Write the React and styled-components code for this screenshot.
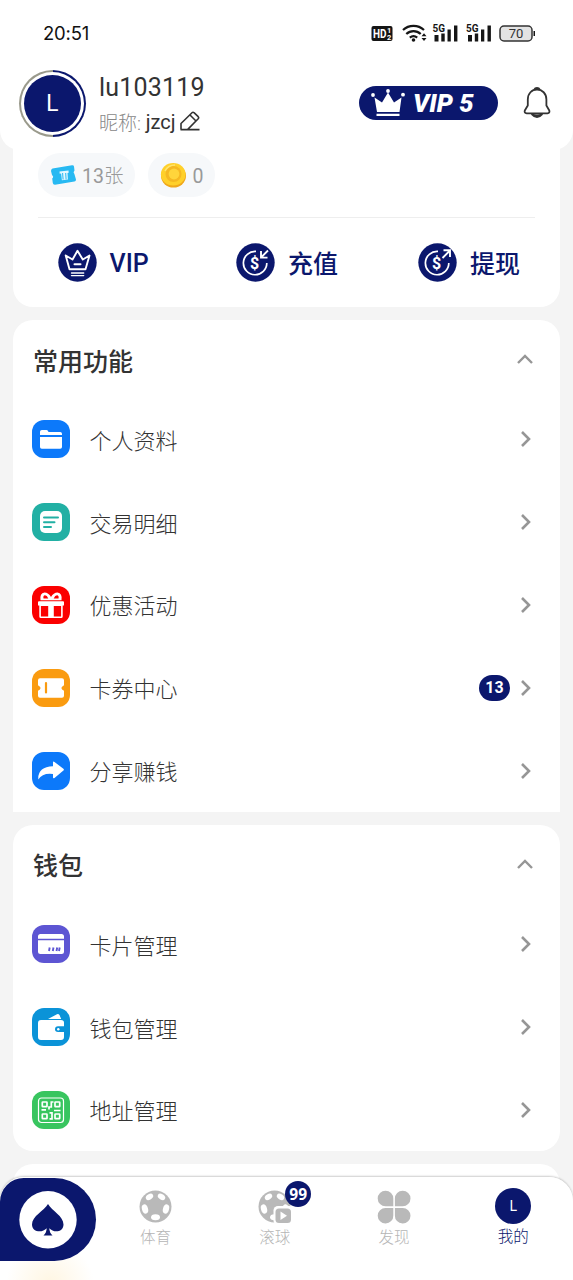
import React from "react"
import styled, { createGlobalStyle } from "styled-components"

const navy = "#0b176d"

const GlobalStyle = createGlobalStyle`
  * {
    box-sizing: border-box;
  }
  body {
    margin: 0;
    background: #f4f4f4;
    font-family: Roboto, "Noto Sans CJK SC", sans-serif;
    color: #333;
  }
  p, h1, h2 {
    margin: 0;
  }
  svg {
    display: block;
    flex-shrink: 0;
  }
`

const Page = styled.div`
  position: relative;
  width: 573px;
  height: 1280px;
  overflow: hidden;
  background: #f4f4f4;
`

const Header = styled.header`
  position: relative;
  z-index: 1;
  height: 150px;
  background: #fff;
  border-radius: 0 0 20px 20px;
`

const StatusBar = styled.div`
  display: flex;
  align-items: center;
  justify-content: space-between;
  height: 66px;
  padding: 0 37px 0 43px;
`

const Clock = styled.span`
  font-family: Inter, sans-serif;
  font-size: 18.5px;
  letter-spacing: -0.2px;
  color: #111;
`

const Profile = styled.div`
  display: flex;
  align-items: center;
  height: 74px;
  padding: 0 20px 0 19px;
`

const AvatarRing = styled.div`
  display: flex;
  align-items: center;
  justify-content: center;
  width: 67px;
  height: 67px;
  padding: 2px;
  border-radius: 50%;
  background: linear-gradient(90deg, #9a9a8c 50%, ${navy} 50%);
`

const AvatarGap = styled.div`
  width: 100%;
  height: 100%;
  padding: 3px;
  border-radius: 50%;
  background: #fff;
`

const Avatar = styled.div`
  display: flex;
  align-items: center;
  justify-content: center;
  width: ${props => props.size || "100%"};
  height: ${props => props.size || "100%"};
  border-radius: 50%;
  background: ${navy};
  color: #fff;
  font-family: Inter, sans-serif;
  font-size: ${props => props.font || "23px"};
  font-weight: 400;
`

const Names = styled.div`
  flex: 1;
  padding: 2px 0 0 13px;
`

const UserName = styled.h1`
  font-size: 25px;
  font-weight: 400;
  line-height: 35px;
  letter-spacing: 0.2px;
`

const Nickname = styled.div`
  display: flex;
  align-items: center;
  height: 34px;
  font-size: 20px;
  white-space: pre;
  svg {
    margin: -1px 0 0 5px;
  }
`

const NickLabel = styled.span`
  font-size: 19px;
  font-weight: 300;
  color: #888;
`

const VipPill = styled.div`
  display: flex;
  align-items: center;
  width: 139px;
  height: 34px;
  margin-right: 23px;
  padding-left: 11px;
  border-radius: 17px;
  background: ${navy};
  color: #fff;
  font-size: 25.5px;
  font-style: italic;
  font-weight: 900;
  svg {
    margin-right: 7px;
  }
`

const Card = styled.section`
  margin: ${props => props.gap || "13px"} 13px 0;
  border-radius: ${props => (props.square ? "20px 20px 0 0" : "20px")};
  background: #fff;
  overflow: hidden;
`

const Summary = styled(Card)`
  height: 177px;
  padding: 23px 25px 0;
`

const Chips = styled.div`
  display: flex;
  gap: 13px;
  height: 65px;
  border-bottom: 1px solid #eee;
`

const Chip = styled.div`
  display: flex;
  align-items: center;
  gap: 5.5px;
  height: 44px;
  padding: 0 12px 0 11.5px;
  border-radius: 22px;
  background: #f6f8fa;
  color: #999;
  font-size: 19.5px;
  font-weight: 300;
  line-height: 28px;
  b {
    font-weight: 400;
  }
  > span, > b {
    padding-top: 4px;
  }
`

const Actions = styled.div`
  display: flex;
  justify-content: space-between;
  padding: 25px 15px 0 20px;
`

const Action = styled.div`
  display: flex;
  align-items: center;
  gap: 12.5px;
  height: 39px;
  min-width: 98px;
  color: ${navy};
  font-size: 25px;
  font-weight: 500;
  line-height: 36px;
  span {
    padding-top: ${props => (props.latin ? "2px" : "4px")};
  }
`

const CardHead = styled.div`
  display: flex;
  align-items: center;
  justify-content: space-between;
  height: 78px;
  padding: 0 26px 0 20px;
`

const CardTitle = styled.h2`
  padding-top: 7px;
  font-size: 25px;
  font-weight: 500;
  line-height: 36px;
`

const Row = styled.div`
  display: flex;
  align-items: center;
  height: 82.8px;
  padding: 0 28px 0 19px;
`

const Tile = styled.div`
  width: 38px;
  height: 38px;
  border-radius: 12px;
  background: ${props => props.color};
`

const RowLabel = styled.p`
  flex: 1;
  padding: 5px 0 0 19.5px;
  font-size: 22px;
  font-weight: 300;
  line-height: 32px;
`

const Count = styled.span`
  width: 31px;
  margin-right: 10px;
  border-radius: 13px;
  background: ${navy};
  color: #fff;
  font-size: 16px;
  font-weight: 700;
  line-height: 26px;
  text-align: center;
`

const NavBar = styled.nav`
  position: absolute;
  left: 0;
  right: 0;
  bottom: 0;
  display: flex;
  height: 103px;
  border-radius: 24px 24px 0 0;
  background: radial-gradient(circle at 50px 107px, #fff6e2 0, #fff 44px);
  box-shadow: 0 -1px 2px rgba(0, 0, 0, 0.2);
`

const Home = styled.div`
  width: 96px;
  height: 83px;
  margin-top: 1px;
  padding: 13px 0 0 19px;
  border-radius: 24px 42px 42px 0;
  background: ${navy};
`

const Tab = styled.div`
  position: relative;
  display: flex;
  flex-direction: column;
  align-items: center;
  width: 119.4px;
  padding-top: ${props => (props.active ? "10.5px" : "13px")};
  font-size: 15.5px;
  font-weight: 300;
  line-height: 24px;
  color: ${props => (props.active ? navy : "#b5b5b5")};
  svg, ${Avatar} {
    margin-bottom: 1.5px;
  }
`

const Bubble = styled.span`
  position: absolute;
  top: 4px;
  left: 70px;
  width: 26px;
  height: 26px;
  border-radius: 50%;
  background: ${navy};
  color: #fff;
  font-family: "Noto Sans", sans-serif;
  font-size: 15.5px;
  font-weight: 700;
  line-height: 26px;
  text-align: center;
`

const StatusIcons = () => (
  <svg width="165" height="22" viewBox="0 0 165 22" fill="#151515">
    <rect x="0.5" y="4" width="21" height="15" rx="2" />
    <g fill="#fff" fontFamily="Roboto" fontWeight="700">
      <text x="2" y="15.8" fontSize="12" textLength="13.5" lengthAdjust="spacingAndGlyphs">HD</text>
      <text x="16" y="11" fontSize="7.5">1</text>
      <text x="16" y="18" fontSize="7.5">2</text>
    </g>
    <g fill="none" stroke="#151515" strokeWidth="2.2">
      <path d="M32 8a15.5 15.5 0 0 1 21 0M35.3 12a10.5 10.5 0 0 1 14.4 0M38.8 15.7a5.8 5.8 0 0 1 7.4 0" />
    </g>
    <circle cx="42.500" cy="18" r="1.8" />
    <path d="M50.500 14.200l2.500-3 2.500 3zM50.500 16l2.500 3 2.500-3z" />
    {[61.5, 95].map(x => (
      <g key={x} transform={`translate(${x} 0)`}>
        <text x="0" y="9.5" fontSize="10.5" fontFamily="Roboto" fontWeight="700" textLength="12.5" lengthAdjust="spacingAndGlyphs">5G</text>
        <path d="M2 13h4v6.500H2zM8.800 11.500h3.400v8H8.800zM15 7.500h3.300v12H15zM21.500 3.500h3.400v16h-3.400z" />
      </g>
    ))}
    <rect x="129" y="4" width="32" height="15" rx="4" fill="#e3e3e3" stroke="#333" strokeWidth="1.5" />
    <path d="M162.500 9h1.500v5h-1.500z" />
    <text x="145" y="16.3" fontSize="13" fontFamily="Roboto" textAnchor="middle" fill="#333">70</text>
  </svg>
)

const PenIcon = () => (
  <svg width="20" height="20" viewBox="0 0 20 20" fill="none" stroke="#333" strokeWidth="1.6" strokeLinejoin="round">
    <path d="M1 18.600V12.500L12 1.700q1-1 2 0L18.200 5.700q.9 1 0 2L7.500 18.600M0.500 18.600H19.500M10 4l6 6" />
  </svg>
)

const CrownSolid = () => (
  <svg width="36" height="28" viewBox="0 0 36 28" fill="#fff">
    <path d="M4.500 8.500L12 13.500 18 3.500 24 13.500 31.500 8.500 29.500 23H7zM6.500 24.800H29.500V27H6.500z" />
    <circle cx="3" cy="6" r="1.9" />
    <circle cx="18" cy="2" r="1.9" />
    <circle cx="33" cy="5.7" r="1.9" />
  </svg>
)

const BellIcon = () => (
  <svg width="32" height="34" viewBox="0 0 32 34" fill="none" stroke="#333" strokeWidth="1.8" strokeLinejoin="round">
    <path d="M6.800 13.500C6.800 7.500 10.800 3.500 16 3.500S25.400 7.500 25.400 13.500V19.500L28.300 24.500Q29 27.200 26.500 27.400H5.700Q3 27.200 3.800 24.500L6.800 19.500z" />
    <path d="M13.300 3.600Q14 1.800 16 1.800T18.800 3.600M11 28.300Q16 34 21 28.300Q16 30.500 11 28.300z" fill="#333" />
  </svg>
)

const TicketIcon = () => (
  <svg width="27" height="24" viewBox="0 0 27 24">
    <path d="M2.500 5.500L22 2.200q1.800-.2 2 1.400l.5 4q-1.800 1.700-.1 3.500L26 16.500q0 1.800-1.600 2L5 21.700q-2 .1-2.200-1.800L2.200 15.500q2-1.800-.2-3.600L1 8Q1 6 2.500 5.500z" fill="#27b9f2" />
    <path d="M9.500 8.500l9-1 .2 2.300-1.200.2.400 6.500-6 .8-.8-6.800-1.400.2z" fill="#e4f8ff" />
    <path d="M12.600 10l.5 6.500M15.700 10l.4 6.400" stroke="#27b9f2" />
  </svg>
)

const CoinIcon = () => (
  <svg width="27" height="26" viewBox="0 0 27 26">
    <ellipse cx="13.500" cy="14" rx="12.500" ry="11.500" fill="#f0a81c" />
    <ellipse cx="13.200" cy="12.300" rx="12.300" ry="11.300" fill="#ffd02a" />
    <circle cx="13.500" cy="12" r="8" fill="#f5b822" />
    <circle cx="14" cy="12" r="5.400" fill="#ffd53b" />
    <path d="M5 9q3-6 10-6" fill="none" stroke="#ffe46e" strokeWidth="1.500" />
  </svg>
)

const VipIcon = () => (
  <svg width="39" height="39" viewBox="0 0 39 39" fill="none" stroke="#fff" strokeLinejoin="round" strokeLinecap="round">
    <circle cx="19.500" cy="19.500" r="19.200" fill={navy} stroke="none" />
    <path d="M11.500 26.300L7.700 12.500 14.500 16.500 19.500 7.800 24.800 16.500 31.500 12.500 27.500 26.300z" strokeWidth="1.900" />
    <path d="M16.500 21.300h6" strokeWidth="2" />
    <path d="M13.500 30h12.200M13.500 32.600h12.200" strokeWidth="1.400" />
  </svg>
)

const MoneyIcon = ({ out }) => (
  <svg width="39" height="39" viewBox="0 0 39 39" fill="none" stroke="#fff" strokeWidth="1.7">
    <circle cx="19.500" cy="19.500" r="19.200" fill={navy} stroke="none" />
    <path d="M20 8.400A11.700 11.700 0 1 0 30.800 20" />
    <path d={out ? "M24.5 15L32 7.5M25.5 7.3H32V14" : "M32 7.5L25 14.5M25 8V14.6H31.5"} strokeWidth="1.9" />
    <text x="18.700" y="25.500" fontSize="16" fontFamily="Roboto" fontWeight="700" textAnchor="middle" fill="#fff" stroke="none">$</text>
  </svg>
)

const Chevron = ({ up }) =>
  up ? (
    <svg width="18" height="12" viewBox="0 0 18 12" fill="none" stroke="#969696" strokeWidth="2.4">
      <path d="M2 10L9 3l7 7" />
    </svg>
  ) : (
    <svg width="12" height="18" viewBox="0 0 12 18" fill="none" stroke="#969696" strokeWidth="2.6">
      <path d="M2 2L9 9l-7 7" />
    </svg>
  )

// glyphs are drawn on the same 38x38 grid as their tile
const glyphs = {
  folder: (
    <g fill="#fff">
      <path d="M8 15V11.800Q8 10 9.800 10h4.700q1 0 1.500 1l.5 1h11.700q1.800 0 1.800 1.800V15zM8 17h22V27q0 1.800-1.800 1.800H9.800Q8 28.800 8 27z" />
    </g>
  ),
  bill: (
    <g>
      <rect x="8" y="8" width="22" height="22" rx="5" fill="#fff" />
      <path d="M12 14.500H26M12 19.200H22.500M12 24H19" stroke="#22b0a4" strokeWidth="2" strokeLinecap="round" />
    </g>
  ),
  gift: (
    <g>
      <path d="M7 15.200H31Q32 15.200 32 16.200V19.500H30.700V30.500Q30.700 32 29.200 32H8.800Q7.300 32 7.300 30.500V19.500H6V16.200Q6 15.200 7 15.200z" fill="#fff" />
      <path d="M8.900 20h7.300V30.600H8.900zM21.800 20h7.300V30.600h-7.300z" fill="#fb0000" />
      <path d="M8.500 14.300Q7.500 7 12.500 6.500Q16.500 6.500 19 11Q21.500 6.500 25.500 6.500Q30.500 7 29.500 14.300z" fill="#fff" />
      <path d="M11.500 12.600Q10.800 9.500 13 9.300Q15 9.300 16.300 12.600zM26.500 12.600Q27.200 9.500 25 9.300Q23 9.300 21.700 12.600z" fill="#fb0000" />
    </g>
  ),
  coupon: (
    <g>
      <path d="M8 9.300h22q2 0 2 2v4.900q-5.200 2.800 0 5.600v4.900q0 2-2 2H8q-2 0-2-2v-4.900q5.200-2.800 0-5.600v-4.900q0-2 2-2z" fill="#fff" />
      <path d="M14 14V23.500" stroke="#fa9b10" strokeWidth="2.200" strokeLinecap="round" />
    </g>
  ),
  share: (
    <path d="M21 10.500Q21 9 22.500 10L31.400 16.800q1 .9 0 1.800L22.500 26Q21 27 21 25.200V22Q10.500 20.700 6.300 27.500Q5.500 15 21 14.300z" fill="#fff" />
  ),
  card: (
    <g>
      <path d="M6 13.800V11.500Q6 9 8.500 9h21Q32 9 32 11.500v2.300zM6 15.300H32V26.500Q32 29 29.500 29h-21Q6 29 6 26.500z" fill="#fff" />
      <path d="M17 26l.7-3.500M20.800 26l.7-3.500M24.500 26l.7-3.500M27 26l.7-3.500" stroke="#5d55d3" strokeWidth="1.900" />
    </g>
  ),
  wallet: (
    <g>
      <path d="M16 11L25 6.200q1.500-.7 2.500.8l1.700 4zM9 12H29q3 0 3 2.500V18.300H26q-3 .2-3 2.900T26 24h6v5q0 3-3 3H9q-3 0-3-3V15q0-3 3-3z" fill="#fff" />
      <circle cx="26.300" cy="21.200" r="1.200" fill="#fff" />
    </g>
  ),
  qr: (
    <g fill="none" stroke="#fff" strokeWidth="1.700">
      <rect x="6.500" y="7" width="25" height="24.500" rx="3" strokeWidth="1.200" />
      <rect x="10.300" y="11" width="4.700" height="4.700" rx="0.500" />
      <rect x="23" y="11" width="4.700" height="4.700" rx="0.500" />
      <rect x="10.300" y="23" width="4.700" height="4.700" rx="0.500" />
      <rect x="23" y="23" width="4.700" height="4.700" rx="0.500" />
      <path d="M21.500 11H19.300V16H17V18.500M9.500 18.800H14M17.500 21.800H20V27.800H17.500M22 19.500H28.500" />
    </g>
  ),
}

const SpadeIcon = () => (
  <svg width="58" height="58" viewBox="0 0 58 58">
    <circle cx="29" cy="28.700" r="28.700" fill="#fff" />
    <path d="M29 13C33 20 44.500 25 44.500 33.500C44.500 41 35 42.500 30.300 37.300Q30.500 42 33.500 44.600H24.500Q27.500 42 27.700 37.300C23 42.500 13 41 13 33.500C13 25 25 20 29 13z" fill={navy} />
  </svg>
)

const Ball = ({ live }) => (
  <svg width="34" height="34" viewBox="0 0 34 34" overflow="visible">
    <circle cx="16.500" cy="16.500" r="16" fill="#b9b9b9" />
    <g fill="#fff">
      <ellipse cx="10.500" cy="6.900" rx="4" ry="2.700" transform="rotate(-32 10.500 6.900)" />
      <ellipse cx="22.500" cy="6.900" rx="4" ry="2.700" transform="rotate(32 22.500 6.900)" />
      <ellipse cx="6" cy="19" rx="3" ry="4.700" transform="rotate(-17 6 19)" />
      <ellipse cx="27" cy="19" rx="3" ry="4.700" transform="rotate(17 27 19)" />
      <ellipse cx="16.500" cy="27.300" rx="4.500" ry="3" />
    </g>
    {live && (
      <g>
        <rect x="15.500" y="16" width="20" height="19" rx="4.500" fill="#fff" />
        <rect x="17.500" y="18.500" width="15.500" height="14.500" rx="3.500" fill="#b9b9b9" />
        <path d="M22.500 21.500v8.400l6.500-4.200z" fill="#fff" />
      </g>
    )}
  </svg>
)

const PetalsIcon = () => (
  <svg width="34" height="34" viewBox="0 0 34 34" fill="#b9b9b9">
    <path d="M16.300 16.300H8.600A7.800 7.800 0 1 1 16.300 8.600zM17.900 16.300V8.600A7.800 7.800 0 1 1 25.600 16.300zM16.300 17.900v7.500A7.800 7.800 0 1 1 8.600 17.900zM17.900 17.900h7.700A7.800 7.800 0 1 1 17.900 25.400z" />
  </svg>
)

const common = [
  { label: "个人资料", icon: "folder", color: "#0c79fa" },
  { label: "交易明细", icon: "bill", color: "#22b0a4" },
  { label: "优惠活动", icon: "gift", color: "#fb0000" },
  { label: "卡券中心", icon: "coupon", color: "#fa9b10", count: 13 },
  { label: "分享赚钱", icon: "share", color: "#0c79fa" },
]

const wallet = [
  { label: "卡片管理", icon: "card", color: "#5d55d3" },
  { label: "钱包管理", icon: "wallet", color: "#0b93d8" },
  { label: "地址管理", icon: "qr", color: "#38c55f" },
]

const MenuCard = ({ title, items, square }) => (
  <Card square={square ? 1 : 0}>
    <CardHead>
      <CardTitle>{title}</CardTitle>
      <Chevron up />
    </CardHead>
    {items.map(item => (
      <Row key={item.label}>
        <Tile color={item.color}>
          <svg width="38" height="38" viewBox="0 0 38 38">
            {glyphs[item.icon]}
          </svg>
        </Tile>
        <RowLabel>{item.label}</RowLabel>
        {item.count ? <Count>{item.count}</Count> : null}
        <Chevron />
      </Row>
    ))}
  </Card>
)

const App = () => (
  <Page>
    <GlobalStyle />
    <Header>
      <StatusBar>
        <Clock>20:51</Clock>
        <StatusIcons />
      </StatusBar>
      <Profile>
        <AvatarRing>
          <AvatarGap>
            <Avatar>L</Avatar>
          </AvatarGap>
        </AvatarRing>
        <Names>
          <UserName>lu103119</UserName>
          <Nickname>
            <NickLabel>昵称: </NickLabel>jzcj
            <PenIcon />
          </Nickname>
        </Names>
        <VipPill>
          <CrownSolid />
          VIP 5
        </VipPill>
        <BellIcon />
      </Profile>
    </Header>
    <Summary gap="-20px">
      <Chips>
        <Chip>
          <TicketIcon />
          <span><b>13</b>张</span>
        </Chip>
        <Chip>
          <CoinIcon />
          <b>0</b>
        </Chip>
      </Chips>
      <Actions>
        <Action latin={1}>
          <VipIcon />
          <span>VIP</span>
        </Action>
        <Action>
          <MoneyIcon />
          <span>充值</span>
        </Action>
        <Action>
          <MoneyIcon out />
          <span>提现</span>
        </Action>
      </Actions>
    </Summary>
    <MenuCard title="常用功能" items={common} square />
    <MenuCard title="钱包" items={wallet} />
    <Card>
      <CardHead />
    </Card>
    <NavBar>
      <Home>
        <SpadeIcon />
      </Home>
      <Tab>
        <Ball />
        体育
      </Tab>
      <Tab>
        <Ball live />
        滚球
        <Bubble>99</Bubble>
      </Tab>
      <Tab>
        <PetalsIcon />
        发现
      </Tab>
      <Tab active>
        <Avatar size="36px" font="14px">L</Avatar>
        我的
      </Tab>
    </NavBar>
  </Page>
)

export default App
